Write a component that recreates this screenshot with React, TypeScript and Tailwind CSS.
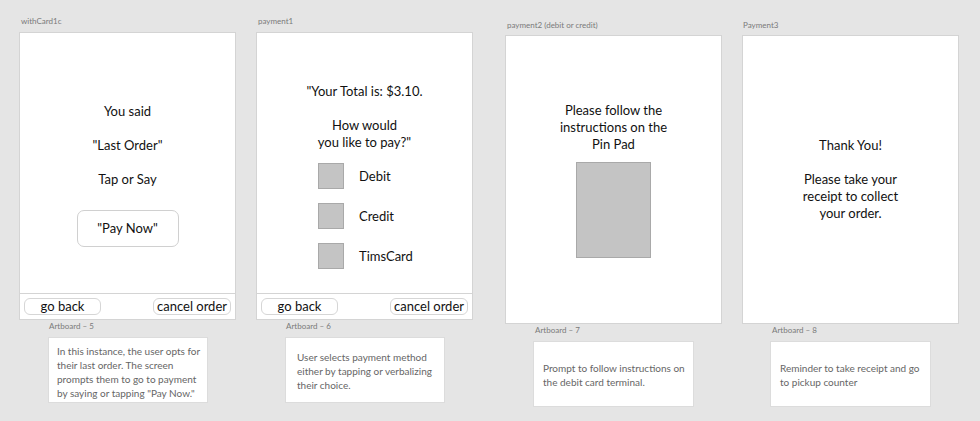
import React from "react";

const font = { fontFamily: 'Lato, "Noto Sans", sans-serif' };

function Footer() {
  return (
    <div className="h-[26px] border-t border-[#d4d4d4] flex items-center justify-between px-[4px]">
      <div className="w-[77px] h-[17px] rounded-[6px] border border-[#d6d6d6] flex items-center justify-center text-[13px] leading-none whitespace-nowrap text-[#111]">go back</div>
      <div className="w-[78px] h-[17px] rounded-[6px] border border-[#d6d6d6] flex items-center justify-center text-[13px] leading-none whitespace-nowrap text-[#111]">cancel order</div>
    </div>
  );
}

export default function App() {
  return (
    <div className="w-[980px] h-[421px] bg-[#e5e5e5] flex text-[#111] overflow-hidden" style={font}>
      {/* Column 1 */}
      <div className="ml-[19px] w-[217px] flex flex-col">
        <div className="h-[32px] pt-[15px] pl-[2px] text-[8px] leading-[12px] text-[#7a7a7a]">withCard1c</div>
        <div className="h-[288px] bg-white border border-[#d4d4d4] flex flex-col">
          <div className="flex-1 flex flex-col items-center pt-[70px] text-[13px] leading-[17px]">
            <div>You said</div>
            <div className="h-[17px]" />
            <div>"Last Order"</div>
            <div className="h-[17px]" />
            <div>Tap or Say</div>
            <div className="mt-[22px] w-[102px] h-[37px] rounded-[7px] border border-[#d0d0d0] flex items-center justify-center">"Pay Now"</div>
          </div>
          <Footer />
        </div>
        <div className="h-[12px] pl-[30px] text-[8px] leading-[12px] text-[#7a7a7a]">Artboard – 5</div>
        <div className="mt-[5px] ml-[29px] w-[160px] h-[66px] bg-white border border-[#dcdcdc] flex items-center pl-[8px] pr-[4px] pt-[4px] text-[10px] leading-[14px] text-[#666]">
          <div>In this instance, the user opts for their last order. The screen prompts them to go to payment by saying or tapping "Pay Now."</div>
        </div>
      </div>

      {/* Column 2 */}
      <div className="ml-[20px] w-[217px] flex flex-col">
        <div className="h-[32px] pt-[15px] pl-[2px] text-[8px] leading-[12px] text-[#7a7a7a]">payment1</div>
        <div className="h-[288px] bg-white border border-[#d4d4d4] flex flex-col">
          <div className="flex-1 flex flex-col pt-[50px] text-[13px] leading-[17px]">
            <div className="text-center">"Your Total is: $3.10.</div>
            <div className="h-[17px]" />
            <div className="text-center">How would</div>
            <div className="text-center">you like to pay?"</div>
            <div className="mt-[12px] flex flex-col gap-[14px] pl-[61px]">
              {["Debit", "Credit", "TimsCard"].map((t) => (
                <div key={t} className="flex items-center h-[26px]">
                  <div className="w-[26px] h-[26px] bg-[#c4c4c4] border border-[#a9a9a9]" />
                  <div className="ml-[15px]">{t}</div>
                </div>
              ))}
            </div>
          </div>
          <Footer />
        </div>
        <div className="h-[12px] pl-[30px] text-[8px] leading-[12px] text-[#7a7a7a]">Artboard – 6</div>
        <div className="mt-[5px] ml-[29px] w-[160px] h-[66px] bg-white border border-[#dcdcdc] flex items-center pl-[11px] pr-[4px] pt-[2px] text-[10px] leading-[14px] text-[#666]">
          <div>User selects payment method either by tapping or verbalizing their choice.</div>
        </div>
      </div>

      {/* Column 3 */}
      <div className="ml-[32px] w-[217px] flex flex-col">
        <div className="h-[35px] pt-[19px] pl-[2px] text-[8px] leading-[12px] text-[#7a7a7a]">payment2 (debit or credit)</div>
        <div className="h-[289px] bg-white border border-[#d4d4d4] flex flex-col items-center pt-[66px] text-[13px] leading-[17px]">
          <div className="text-center">Please follow the<br />instructions on the<br />Pin Pad</div>
          <div className="mt-[9px] w-[75px] h-[96px] bg-[#c4c4c4] border border-[#a9a9a9]" />
        </div>
        <div className="h-[12px] pl-[30px] text-[8px] leading-[12px] text-[#7a7a7a]">Artboard – 7</div>
        <div className="mt-[5px] ml-[28px] w-[161px] h-[66px] bg-white border border-[#dcdcdc] flex items-center pl-[9px] pr-[4px] pt-[2px] text-[10px] leading-[14px] text-[#666]">
          <div>Prompt to follow instructions on the debit card terminal.</div>
        </div>
      </div>

      {/* Column 4 */}
      <div className="ml-[20px] w-[217px] flex flex-col">
        <div className="h-[35px] pt-[19px] pl-[1px] text-[8px] leading-[12px] text-[#7a7a7a]">Payment3</div>
        <div className="h-[289px] bg-white border border-[#d4d4d4] flex flex-col items-center pt-[101px] text-[13px] leading-[17px]">
          <div className="text-center">Thank You!<br /><br />Please take your<br />receipt to collect<br />your order.</div>
        </div>
        <div className="h-[12px] pl-[30px] text-[8px] leading-[12px] text-[#7a7a7a]">Artboard – 8</div>
        <div className="mt-[5px] ml-[28px] w-[161px] h-[66px] bg-white border border-[#dcdcdc] flex items-center pl-[9px] pr-[4px] pt-[2px] text-[10px] leading-[14px] text-[#666]">
          <div>Reminder to take receipt and go to pickup counter</div>
        </div>
      </div>
    </div>
  );
}
